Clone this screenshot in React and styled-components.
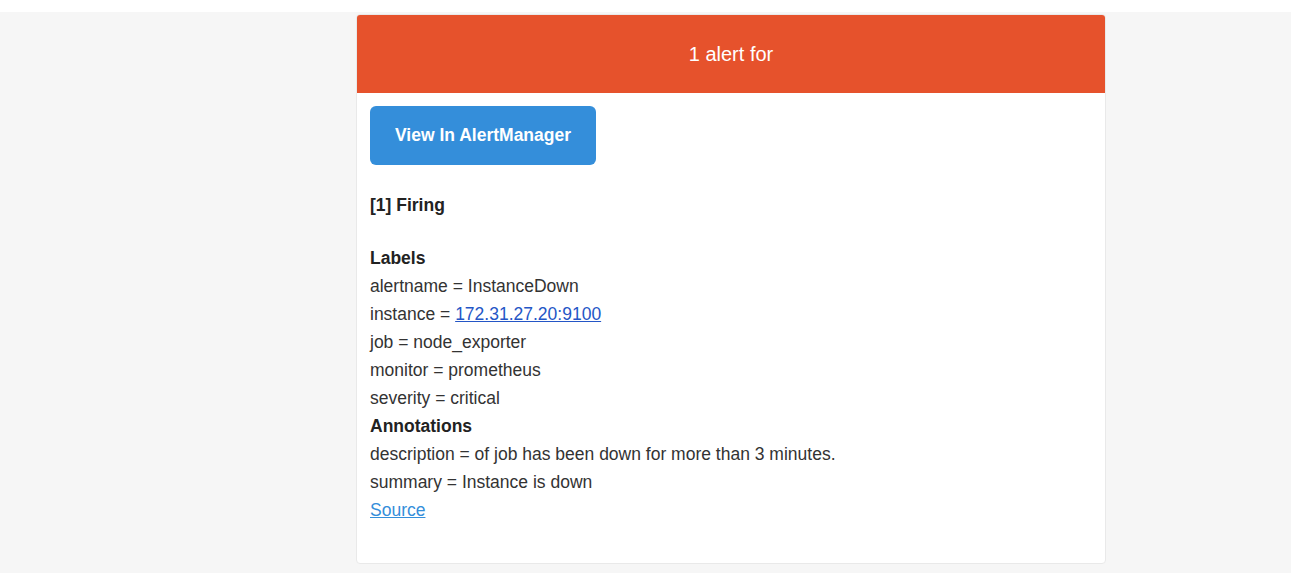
import React from "react";
import styled, { createGlobalStyle } from "styled-components";

const Global = createGlobalStyle`
  html, body { margin: 0; padding: 0; background: #ffffff; }
  body { font-family: "Liberation Sans", Arial, Helvetica, sans-serif; }
`;

const Page = styled.div`
  padding-top: 12px;
  background: #ffffff;
`;

const Backdrop = styled.main`
  background: #f6f6f6;
  min-height: 561px;
  padding: 2px 0 0 356px;
  box-sizing: border-box;
`;

const Card = styled.section`
  width: 750px;
  box-sizing: border-box;
  background: #ffffff;
  border: 1px solid #e9e9e9;
  border-radius: 4px;
  overflow: hidden;
`;

const Header = styled.header`
  background: #e6522c;
  color: #ffffff;
  font-size: 20px;
  line-height: 28px;
  text-align: center;
  padding: 25px 0;
`;

const Content = styled.div`
  padding: 13px 13px 14px 13px;
  color: #333333;
  font-size: 17.5px;
  line-height: 28px;
`;

const Block = styled.div`
  padding-bottom: ${(p) => (p.$first ? "26px" : "25px")};
`;

const Button = styled.a`
  display: inline-block;
  background: #348eda;
  color: #ffffff;
  font-weight: bold;
  font-size: 17.5px;
  line-height: 35px;
  padding: 12px 25px;
  border-radius: 6px;
  text-decoration: none;
`;

const Strong = styled.strong`
  color: #222222;
  font-weight: bold;
`;

const Line = styled.div``;

const Link = styled.a`
  color: ${(p) => (p.$light ? "#348eda" : "#2456c6")};
  text-decoration: underline;
`;

const labels = [
  ["alertname", "InstanceDown"],
  ["instance", "172.31.27.20:9100", true],
  ["job", "node_exporter"],
  ["monitor", "prometheus"],
  ["severity", "critical"],
];

const annotations = [
  ["description", "of job has been down for more than 3 minutes."],
  ["summary", "Instance is down"],
];

export default function App() {
  return (
    <>
      <Global />
      <Page>
        <Backdrop>
          <Card>
            <Header>1 alert for</Header>
            <Content>
              <Block $first>
                <Button href="#">View In AlertManager</Button>
              </Block>
              <Block>
                <Strong>[1] Firing</Strong>
              </Block>
              <Block>
                <Line>
                  <Strong>Labels</Strong>
                </Line>
                {labels.map(([k, v, link]) => (
                  <Line key={k}>
                    {k} = {link ? <Link href="#">{v}</Link> : v}
                  </Line>
                ))}
                <Line>
                  <Strong>Annotations</Strong>
                </Line>
                {annotations.map(([k, v]) => (
                  <Line key={k}>
                    {k} = {v}
                  </Line>
                ))}
                <Line>
                  <Link href="#" $light>
                    Source
                  </Link>
                </Line>
              </Block>
            </Content>
          </Card>
        </Backdrop>
      </Page>
    </>
  );
}
